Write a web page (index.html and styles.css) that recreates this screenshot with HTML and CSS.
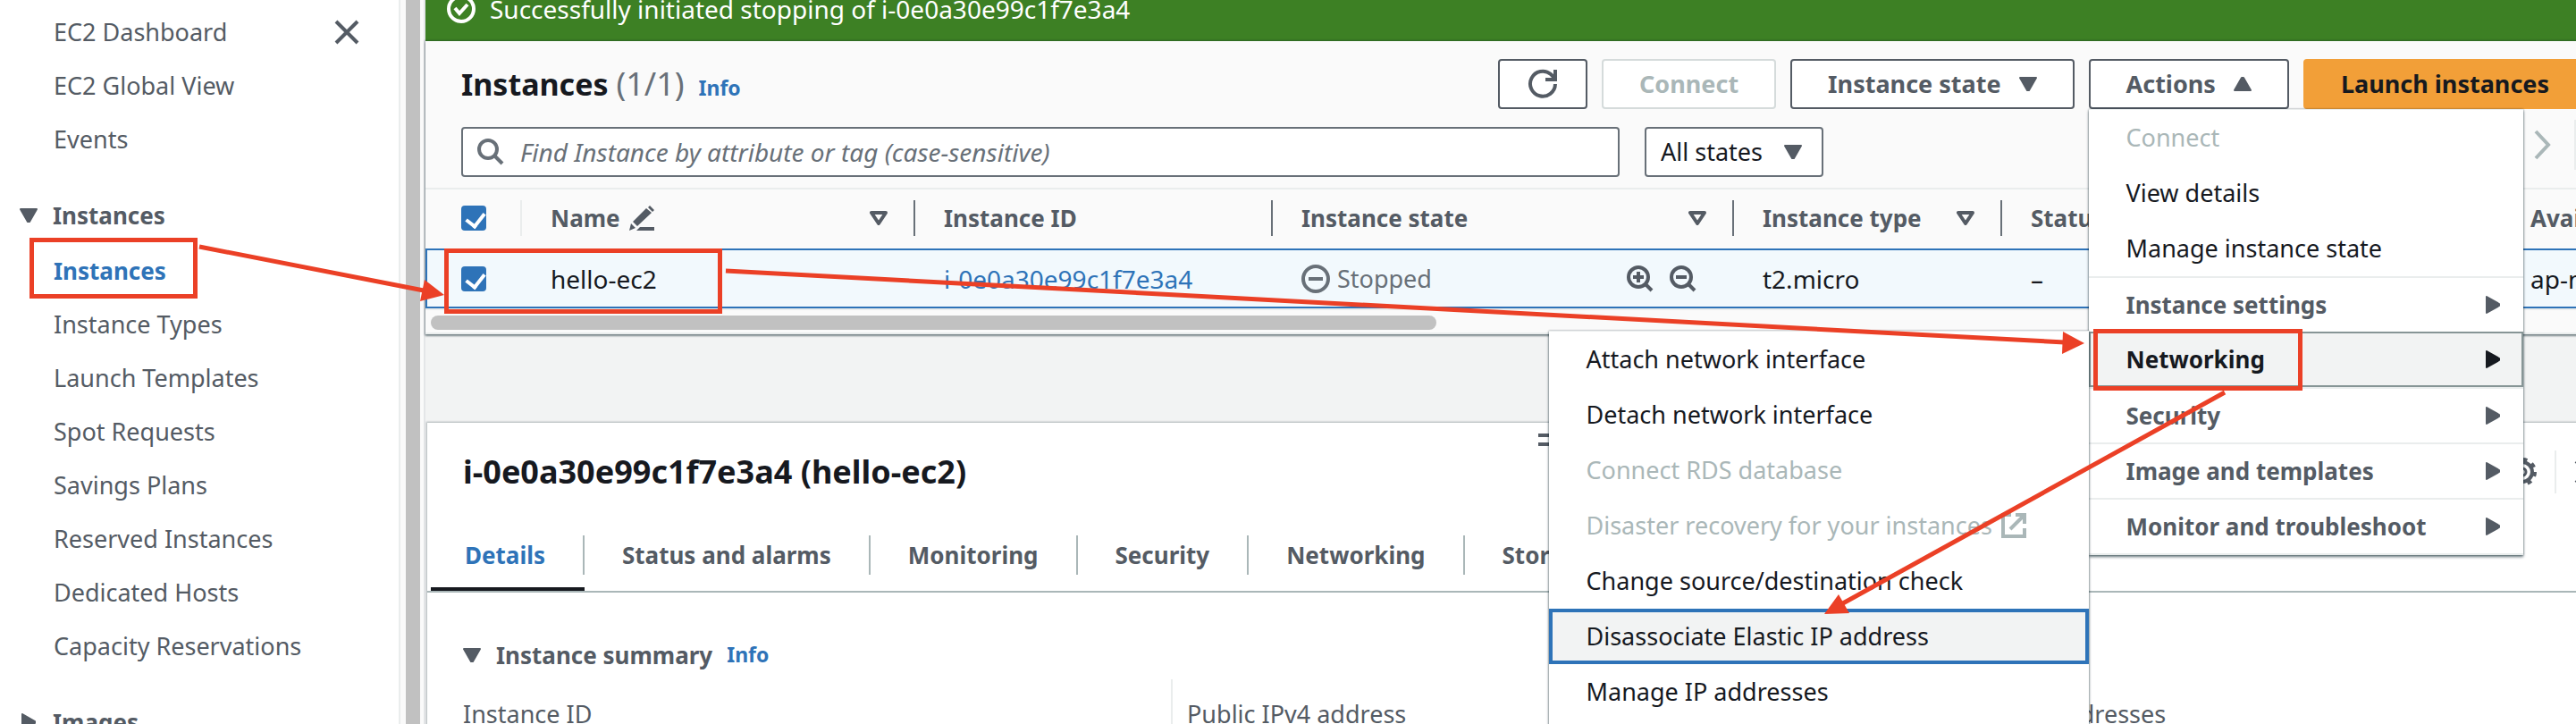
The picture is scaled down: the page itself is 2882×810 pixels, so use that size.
FILE: index.html
```html
<!DOCTYPE html>
<html lang="en">
<head>
<meta charset="utf-8">
<title>Instances | EC2</title>
<link rel="stylesheet" href="styles.css">
</head>
<body>
<svg class="sprite" aria-hidden="true">
  <symbol id="tri-down" viewBox="0 0 20 16"><path d="M1 1h18L11 15H9z" fill="currentColor" stroke="currentColor" stroke-width="2" stroke-linejoin="round"/></symbol>
  <symbol id="tri-up" viewBox="0 0 20 16"><path d="M1 15h18L11 1H9z" fill="currentColor" stroke="currentColor" stroke-width="2" stroke-linejoin="round"/></symbol>
  <symbol id="tri-right" viewBox="0 0 16 20"><path d="M1 1v18L15 11V9z" fill="currentColor" stroke="currentColor" stroke-width="2" stroke-linejoin="round"/></symbol>
  <symbol id="tri-open" viewBox="0 0 20 16"><path d="M2 2h16l-8 12z" fill="none" stroke="currentColor" stroke-width="4" stroke-linejoin="round"/></symbol>
  <symbol id="cross" viewBox="0 0 28 28"><path d="M2 2l24 24M26 2L2 26" fill="none" stroke="currentColor" stroke-width="4"/></symbol>
</svg>

<div class="app">
  <nav class="sidebar" aria-label="EC2">
    <div class="side-top">
      <a class="side-link" href="#">EC2 Dashboard</a>
      <button class="icon-btn" aria-label="Close navigation"><svg width="28" height="28"><use href="#cross"/></svg></button>
    </div>
    <a class="side-link" href="#">EC2 Global View</a>
    <a class="side-link" href="#">Events</a>
    <button class="side-group"><svg width="20" height="16"><use href="#tri-down"/></svg>Instances</button>
    <a class="side-link current" href="#">Instances</a>
    <a class="side-link" href="#">Instance Types</a>
    <a class="side-link" href="#">Launch Templates</a>
    <a class="side-link" href="#">Spot Requests</a>
    <a class="side-link" href="#">Savings Plans</a>
    <a class="side-link" href="#">Reserved Instances</a>
    <a class="side-link" href="#">Dedicated Hosts</a>
    <a class="side-link" href="#">Capacity Reservations</a>
    <button class="side-group"><svg width="20" height="20"><use href="#tri-right"/></svg>Images</button>
  </nav>
  <div class="side-scroll"><div class="side-thumb"></div></div>

  <main class="main">
    <div class="flash" role="status">
      <svg width="32" height="32" viewBox="0 0 32 32" fill="none" stroke="#fff" stroke-width="4"><circle cx="16" cy="16" r="14"/><path d="M9 15l5 6 9-10"/></svg>
      <span>Successfully initiated stopping of i-0e0a30e99c1f7e3a4</span>
    </div>

    <section class="card">
      <div class="card-head">
        <div class="heading"><h1>Instances <span class="count">(1/1)</span></h1><a class="info" href="#">Info</a></div>
        <div class="buttons">
          <button class="btn refresh" aria-label="Refresh"><svg width="34" height="34" viewBox="0 0 34 34" fill="none" stroke="currentColor" stroke-width="4"><path d="M31 17a14 14 0 1 1-5-11l5 5"/><path d="M31 1v11H20"/></svg></button>
          <button class="btn connect" disabled>Connect</button>
          <button class="btn">Instance state<svg width="20" height="16"><use href="#tri-down"/></svg></button>
          <div class="dropdown">
            <button class="btn" aria-expanded="true">Actions<svg width="20" height="16"><use href="#tri-up"/></svg></button>
            <ul class="menu">
              <li><button class="item" disabled>Connect</button></li>
              <li><button class="item">View details</button></li>
              <li><button class="item">Manage instance state</button></li>
              <li><button class="item parent">Instance settings<svg width="16" height="20"><use href="#tri-right"/></svg></button></li>
              <li class="open"><button class="item parent">Networking<svg width="16" height="20"><use href="#tri-right"/></svg></button>
                <ul class="menu submenu">
                  <li><button class="item">Attach network interface</button></li>
                  <li><button class="item">Detach network interface</button></li>
                  <li><button class="item" disabled>Connect RDS database</button></li>
                  <li><button class="item" disabled>Disaster recovery for your instances<svg class="ext" width="28" height="28" viewBox="0 0 28 28" fill="none" stroke="currentColor" stroke-width="4"><path d="M11 2H2v24h24v-9"/><path d="M16 2h10v10M26 2L10 18"/></svg></button></li>
                  <li><button class="item">Change source/destination check</button></li>
                  <li><button class="item focused">Disassociate Elastic IP address</button></li>
                  <li><button class="item">Manage IP addresses</button></li>
                </ul>
              </li>
              <li><button class="item parent">Security<svg width="16" height="20"><use href="#tri-right"/></svg></button></li>
              <li><button class="item parent">Image and templates<svg width="16" height="20"><use href="#tri-right"/></svg></button></li>
              <li><button class="item parent">Monitor and troubleshoot<svg width="16" height="20"><use href="#tri-right"/></svg></button></li>
            </ul>
          </div>
          <button class="btn primary">Launch instances</button>
        </div>
      </div>

      <div class="toolbar">
        <label class="search">
          <svg width="30" height="30" viewBox="0 0 30 30" fill="none" stroke="currentColor" stroke-width="4"><circle cx="12" cy="12" r="10"/><path d="M19 19l9 9"/></svg>
          <input type="text" aria-label="Find instances" placeholder="Find Instance by attribute or tag (case-sensitive)">
        </label>
        <div class="select">
          <select aria-label="Instance state filter"><option>All states</option></select>
          <svg width="20" height="16"><use href="#tri-down"/></svg>
        </div>
        <div class="pager">
          <button class="icon-btn" aria-label="Next page" disabled><svg width="20" height="36" viewBox="0 0 20 36" fill="none" stroke="currentColor" stroke-width="4"><path d="M2 3l14 15L2 33"/></svg></button>
          <span class="rule"></span>
        </div>
      </div>

      <table>
        <colgroup><col class="c1"><col class="c2"><col class="c3"><col class="c4"><col class="c5"><col class="c6"><col></colgroup>
        <thead>
          <tr>
            <th><div class="th pick"><input type="checkbox" checked aria-label="Select all"></div></th>
            <th><div class="th"><span class="name">Name <svg width="28" height="28" viewBox="0 0 28 28"><path d="M0 28l2-8 5 5zM4 18L19 3l6 5L9 23zM21 2l2-2 5 5-2 2zM12 24h16v4H8z" fill="currentColor"/></svg></span><svg width="20" height="16"><use href="#tri-open"/></svg></div></th>
            <th><div class="th">Instance ID</div></th>
            <th><div class="th">Instance state<svg width="20" height="16"><use href="#tri-open"/></svg></div></th>
            <th><div class="th">Instance type<svg width="20" height="16"><use href="#tri-open"/></svg></div></th>
            <th><div class="th">Status check</div></th>
            <th><div class="th">Availability Zone</div></th>
          </tr>
        </thead>
        <tbody>
          <tr>
            <td><div class="td pick"><input type="checkbox" checked aria-label="Select hello-ec2"></div></td>
            <td><div class="td">hello-ec2</div></td>
            <td><div class="td"><a href="#">i-0e0a30e99c1f7e3a4</a></div></td>
            <td><div class="td state"><svg width="32" height="32" viewBox="0 0 32 32" fill="none" stroke="currentColor" stroke-width="4"><circle cx="16" cy="16" r="14"/><path d="M8 16h16"/></svg><span>Stopped</span>
              <button class="icon-btn zoom-first" aria-label="Filter in"><svg width="30" height="30" viewBox="0 0 30 30" fill="none" stroke="currentColor" stroke-width="4"><circle cx="13" cy="13" r="11"/><path d="M21 21l7 7M7 13h12M13 7v12"/></svg></button>
              <button class="icon-btn" aria-label="Filter out"><svg width="30" height="30" viewBox="0 0 30 30" fill="none" stroke="currentColor" stroke-width="4"><circle cx="13" cy="13" r="11"/><path d="M21 21l7 7M7 13h12"/></svg></button></div></td>
            <td><div class="td">t2.micro</div></td>
            <td><div class="td">–</div></td>
            <td><div class="td">ap-northeast-2a</div></td>
          </tr>
        </tbody>
      </table>
      <div class="hscroll"><div class="hthumb"></div></div>
    </section>

    <section class="panel">
      <div class="handle"></div>
      <div class="panel-head">
        <h2>i-0e0a30e99c1f7e3a4 (hello-ec2)</h2>
        <div class="panel-tools">
          <button class="icon-btn" aria-label="Preferences"><svg width="32" height="32" viewBox="0 0 32 32" fill="none" stroke="currentColor"><circle cx="16" cy="16" r="11" stroke-width="4"/><circle cx="16" cy="16" r="14" stroke-width="4" stroke-dasharray="5 6"/><circle cx="16" cy="16" r="4" stroke-width="3"/></svg></button>
          <span class="rule"></span>
          <button class="icon-btn" aria-label="Close panel"><svg width="28" height="28"><use href="#cross"/></svg></button>
        </div>
      </div>
      <ul class="tabs">
        <li class="active"><a href="#">Details</a></li>
        <li><a href="#">Status and alarms</a></li>
        <li><a href="#">Monitoring</a></li>
        <li><a href="#">Security</a></li>
        <li><a href="#">Networking</a></li>
        <li><a href="#">Storage</a></li>
      </ul>
      <div class="summary">
        <div class="summary-head"><button class="toggle"><svg width="20" height="16"><use href="#tri-down"/></svg>Instance summary</button><a class="info" href="#">Info</a></div>
        <div class="fields">
          <div class="field">Instance ID</div>
          <div class="field">Public IPv4 address</div>
          <div class="field">Private IPv4 addresses</div>
        </div>
      </div>
    </section>
  </main>
</div>

<svg class="notes" width="2882" height="810" viewBox="0 0 2882 810" aria-hidden="true">
  <g fill="none" stroke="#eb4026" stroke-width="5">
    <rect x="35.500" y="268.500" width="183" height="63"/>
    <rect x="499.500" y="280.500" width="306" height="68"/>
    <rect x="2344.500" y="370.500" width="229" height="64"/>
    <path d="M223 276L474 325M812 303L2310 383M2489 439L2060 676"/>
  </g>
  <g fill="#eb4026">
    <path d="M497 330L475 313L470 337z"/>
    <path d="M2332 384L2308 371L2307 396z"/>
    <path d="M2041 687L2057 665L2069 686z"/>
  </g>
</svg>
</body>
</html>
```
FILE: styles.css
```css
* { box-sizing: border-box; }
html, body { margin: 0; height: 100%; overflow: hidden; }
body {
  font-family: "Noto Sans", "Open Sans", sans-serif;
  font-size: 27px;
  line-height: 36px;
  color: #16191f;
  background: #f2f3f3;
}
button, input, select { font: inherit; color: inherit; margin: 0; }
button { background: none; border: 0; padding: 0; text-align: left; }
a { color: #2e73b8; text-decoration: none; }
ul { list-style: none; margin: 0; padding: 0; }
h1, h2 { margin: 0; font-size: 36px; line-height: 44px; }
h1 { font-size: 34px; }
svg { display: block; flex: none; }
.sprite { position: absolute; width: 0; height: 0; }
.notes { position: absolute; left: 0; top: 0; z-index: 20; pointer-events: none; }

/* The console is a little wider than the window and runs off its right edge. */
.app { display: flex; width: calc(100% + 52px); height: 100%; overflow: hidden; }

.sidebar { flex: none; width: 448px; padding-top: 6px; background: #fff; border-right: 2px solid #eaeded; overflow: hidden; color: #545b64; }
.side-top { display: flex; align-items: center; justify-content: space-between; padding-right: 44px; }
.side-link { display: block; padding: 12px 0 12px 60px; color: #545b64; }
.side-link.current { color: #2e73b8; font-size: 26px; font-weight: bold; }
.side-group { display: flex; align-items: center; gap: 17px; width: 100%; margin: 25px 0 2px; padding: 12px 22px; font-size: 26px; font-weight: bold; }
.side-scroll { flex: none; width: 28px; padding: 0 6px; background: #fafafa; border-right: 2px solid #e4e6e8; }
.side-thumb { width: 16px; height: 100%; background: #c1c1c1; }
.icon-btn { color: #545b64; }
.icon-btn:disabled { color: #aab7b8; }

.main { flex: 1; min-width: 0; display: flex; flex-direction: column; }
.flash { display: flex; align-items: center; gap: 16px; flex: none; height: 54px; margin-top: -8px; padding: 0 24px 18px; background: #3d8024; color: #fff; font-size: 28px; }

.card { position: relative; z-index: 2; flex: none; background: #fafafa; border-bottom: 2px solid #eaeded; box-shadow: 0 0 2px 1px rgba(0, 28, 36, .3), 0 2px 2px rgba(0, 28, 36, .4); }
.card-head { display: flex; justify-content: space-between; align-items: center; padding: 20px 40px 12px; }
.heading { display: flex; align-items: baseline; gap: 16px; }
.count { font-size: 36px; font-weight: normal; color: #687078; }
.info { font-size: 23px; font-weight: bold; }
.buttons { display: flex; gap: 16px; }
.btn { display: flex; align-items: center; justify-content: center; gap: 20px; height: 56px; padding: 0 40px; border: 2px solid #545b64; border-radius: 4px; background: #fff; color: #545b64; font-weight: bold; white-space: nowrap; }
.btn:disabled { border-color: #d5dbdb; color: #aab7b8; }
.btn.refresh { width: 100px; padding: 0; }
.btn.primary { border-color: #f29f38; background: #f29f38; color: #16191f; }

.dropdown { position: relative; }
.menu { position: absolute; left: 0; top: 100%; z-index: 5; width: 486px; background: #fff; border-top: 1px solid #eaeded; border-bottom: 2px solid #eaeded; box-shadow: 0 2px 3px rgba(0, 28, 36, .6), 0 0 2px rgba(0, 28, 36, .4); }
.item { display: flex; align-items: center; justify-content: space-between; width: 100%; height: 62px; padding: 0 26px 0 42px; white-space: nowrap; }
.item:disabled { color: #aab7b8; }
.item.parent { border-top: 2px solid #eaeded; color: #545b64; font-size: 26px; font-weight: bold; }
.open { position: relative; }
.open > .item.parent { border: 2px solid #879596; padding: 0 24px 0 40px; background: #f2f3f3; color: #16191f; }
.submenu { left: auto; right: 100%; top: -1px; width: 604px; padding-bottom: 16px; }
.submenu .item { justify-content: flex-start; gap: 10px; }
.submenu .focused { border: 4px solid #2e73b8; padding: 0 38px; background: #f2f3f3; }

.toolbar { display: flex; align-items: flex-start; padding: 0 40px 12px; border-bottom: 2px solid #eaeded; }
.search { display: flex; align-items: center; gap: 18px; width: 54.5%; height: 56px; margin: 8px 28px 0 0; padding: 0 16px; border: 2px solid #687078; border-radius: 4px; background: #fff; color: #687078; font-size: 28px; }
.search input { flex: 1; min-width: 0; height: 52px; border: 0; padding: 0; background: none; }
.search input::placeholder { color: #687078; font-style: italic; opacity: 1; }
.select { position: relative; width: 200px; height: 56px; margin-top: 8px; }
.select select { width: 100%; height: 100%; padding: 0 16px; appearance: none; border: 2px solid #687078; border-radius: 4px; background: #fff; }
.select svg { position: absolute; right: 24px; top: 20px; color: #545b64; }
.pager { display: flex; align-items: center; gap: 25px; height: 56px; margin: 0 12px 0 auto; }
.rule { width: 2px; height: 48px; background: #eaeded; }
.pager .rule { height: 56px; }

table { table-layout: fixed; width: 100%; border-spacing: 0; }
th, td { padding: 0; text-align: left; overflow: hidden; white-space: nowrap; }
.c1 { width: 108px; } .c2 { width: 440px; } .c3 { width: 400px; } .c4 { width: 516px; } .c5 { width: 300px; } .c6 { width: 559px; }
.th { display: flex; align-items: center; justify-content: space-between; height: 40px; margin: 12px 0 14px; padding: 0 29px 0 32px; border-right: 2px solid #687078; color: #545b64; font-size: 26px; }
.th.pick { border-color: #eaeded; }
.th.pick, .td.pick { padding-left: 40px; }
td:first-child { border-left: 2px solid #2e73b8; }
.td.pick { padding-left: 38px; }
.name { display: flex; align-items: center; gap: 10px; }
td { background: #f2f9fd; border: solid #2e73b8; border-width: 2px 0; }
.td { display: flex; align-items: center; height: 63px; padding: 0 42px 0 32px; font-size: 28px; }
.td.state { gap: 8px; color: #687078; font-size: 27px; }
.state .icon-btn + .icon-btn { margin-left: 10px; }
.zoom-first { margin-left: auto; }
input[type="checkbox"] { flex: none; display: block; width: 28px; height: 28px; appearance: none; border-radius: 4px; background: #2e73b8; }
input[type="checkbox"]::before { content: ""; display: block; width: 10px; height: 16px; margin: 4px 0 0 9px; border: solid #fff; border-width: 0 4px 4px 0; transform: rotate(38deg); }
.hscroll { padding: 6px 6px 3px; border-top: 2px solid #eaeded; }
.hthumb { width: 46%; height: 16px; border-radius: 8px; background: #c1c1c1; }

.panel { position: relative; flex: 1 0 auto; margin: 99px 0 0 2px; background: #fff; box-shadow: 0 0 2px 1px rgba(0, 28, 36, .3); }
.handle { position: absolute; left: 50.6%; top: 12px; width: 24px; height: 14px; border: solid #545b64; border-width: 4px 0; }
.panel-head { display: flex; align-items: center; justify-content: space-between; height: 110px; padding: 0 26px 0 40px; }
.panel-tools { display: flex; align-items: center; gap: 20px; }
.tabs { display: flex; padding-left: 4px; border-bottom: 2px solid #aab7b8; font-size: 26px; font-weight: bold; }
.tabs li { padding: 16px 0 14px; border-bottom: 4px solid transparent; }
.tabs a { display: block; padding: 4px 42px; border-right: 2px solid #aab7b8; color: #545b64; }
.tabs li:last-child a { border-right: 0; }
.tabs .active { border-color: #16191f; }
.tabs .active a { padding-left: 38px; color: #2e73b8; }
.summary { padding: 51px 40px 0; }
.summary-head { display: flex; align-items: baseline; gap: 16px; margin-bottom: 9px; }
.toggle { display: flex; align-items: center; gap: 17px; color: #545b64; font-size: 26px; font-weight: bold; }
.fields { display: grid; grid-template-columns: repeat(3, 1fr); column-gap: 54px; }
.field { padding: 21px 0; color: #545b64; white-space: nowrap; }
.field + .field { margin-left: -18px; padding-left: 16px; border-left: 2px solid #eaeded; }
```
